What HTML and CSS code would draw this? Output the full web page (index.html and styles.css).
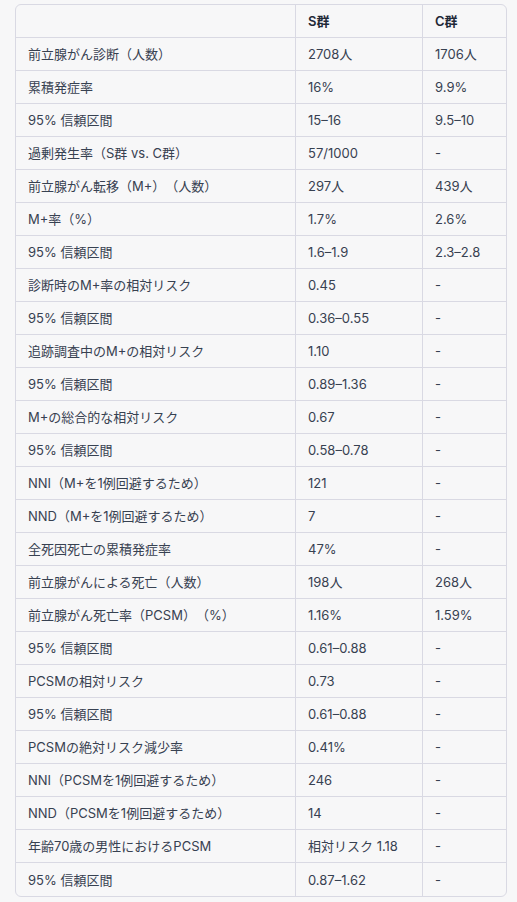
FILE: index.html
```html
<!DOCTYPE html>
<html lang="ja">
<head>
<meta charset="utf-8">
<link rel="stylesheet" href="styles.css">
</head>
<body>
<div class="wrap">
<table class="data">
<colgroup><col class="c1"><col class="c2"><col class="c3"></colgroup>
<thead>
<tr><th></th><th>S群</th><th>C群</th></tr>
</thead>
<tbody>
<tr><td>前立腺がん診断（人数）</td><td>2708人</td><td>1706人</td></tr>
<tr><td>累積発症率</td><td>16%</td><td>9.9%</td></tr>
<tr><td>95% 信頼区間</td><td>15–16</td><td>9.5–10</td></tr>
<tr><td>過剰発生率（S群 vs. C群）</td><td>57/1000</td><td>-</td></tr>
<tr><td>前立腺がん転移（M+）（人数）</td><td>297人</td><td>439人</td></tr>
<tr><td>M+率（%）</td><td>1.7%</td><td>2.6%</td></tr>
<tr><td>95% 信頼区間</td><td>1.6–1.9</td><td>2.3–2.8</td></tr>
<tr><td>診断時のM+率の相対リスク</td><td>0.45</td><td>-</td></tr>
<tr><td>95% 信頼区間</td><td>0.36–0.55</td><td>-</td></tr>
<tr><td>追跡調査中のM+の相対リスク</td><td>1.10</td><td>-</td></tr>
<tr><td>95% 信頼区間</td><td>0.89–1.36</td><td>-</td></tr>
<tr><td>M+の総合的な相対リスク</td><td>0.67</td><td>-</td></tr>
<tr><td>95% 信頼区間</td><td>0.58–0.78</td><td>-</td></tr>
<tr><td>NNI（M+を1例回避するため）</td><td>121</td><td>-</td></tr>
<tr><td>NND（M+を1例回避するため）</td><td>7</td><td>-</td></tr>
<tr><td>全死因死亡の累積発症率</td><td>47%</td><td>-</td></tr>
<tr><td>前立腺がんによる死亡（人数）</td><td>198人</td><td>268人</td></tr>
<tr><td>前立腺がん死亡率（PCSM）（%）</td><td>1.16%</td><td>1.59%</td></tr>
<tr><td>95% 信頼区間</td><td>0.61–0.88</td><td>-</td></tr>
<tr><td>PCSMの相対リスク</td><td>0.73</td><td>-</td></tr>
<tr><td>95% 信頼区間</td><td>0.61–0.88</td><td>-</td></tr>
<tr><td>PCSMの絶対リスク減少率</td><td>0.41%</td><td>-</td></tr>
<tr><td>NNI（PCSMを1例回避するため）</td><td>246</td><td>-</td></tr>
<tr><td>NND（PCSMを1例回避するため）</td><td>14</td><td>-</td></tr>
<tr><td>年齢70歳の男性におけるPCSM</td><td>相対リスク 1.18</td><td>-</td></tr>
<tr><td>95% 信頼区間</td><td>0.87–1.62</td><td>-</td></tr>
</tbody>
</table>
</div>
</body>
</html>
```
FILE: styles.css
```css
html, body {
  margin: 0;
  padding: 0;
  background: #f7f7f8;
}
body {
  font-family: Inter, "Noto Sans CJK JP", sans-serif;
  font-size: 13px;
  color: #374151;
  text-spacing-trim: space-all;
}
.wrap {
  padding: 4px 10px 0 15px;
}
.data {
  width: 492px;
  table-layout: fixed;
  border-collapse: separate;
  border-spacing: 0;
  border: 1px solid #d9d9e3;
  border-radius: 6px;
  background: #f7f7f8;
}
.c1 { width: 279px; }
.c2 { width: 127px; }
.c3 { width: 84px; }
.data th,
.data td {
  height: 33px;
  box-sizing: border-box;
  padding: 0 12px;
  text-align: left;
  vertical-align: middle;
  line-height: 16px;
  white-space: nowrap;
  border-bottom: 1px solid #d9d9e3;
  border-left: 1px solid #d9d9e3;
}
.data th:first-child,
.data td:first-child {
  border-left: none;
}
.data tbody tr:last-child td {
  border-bottom: none;
}
.data th {
  font-weight: 600;
  color: #1f2937;
}
```
